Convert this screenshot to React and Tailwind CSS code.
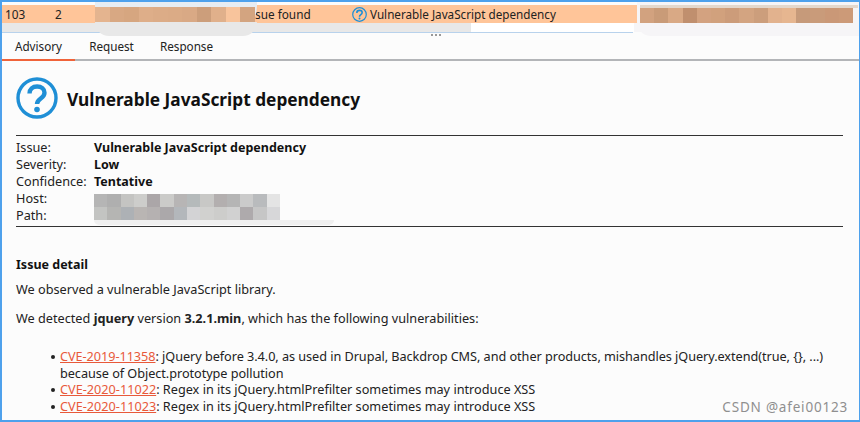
const topMosaic = ["bg-[#e4b48f]","bg-[#d8a883]","bg-[#d6a680]","bg-[#deae89]","bg-[#dcac87]","bg-[#dbab86]","bg-[#d9a985]","bg-[#cc9e7b]","bg-[#e0b08b]","bg-[#f8c49c]","bg-[#d3a480]"];
const rightMosaic = ["bg-[#d2a27f]","bg-[#c99b78]","bg-[#d9a985]","bg-[#c08f6e]","bg-[#d3a280]","bg-[#d1a17d]","bg-[#cc9c7a]","bg-[#d3a481]","bg-[#cc9e7c]","bg-[#e2b28e]","bg-[#e6b690]","bg-[#c69a7a]","bg-[#c99b7a]","bg-[#ca9877]","bg-[#cc9a78]"];
const m1 = ["bg-[#b5b5b5]","bg-[#afafaf]","bg-[#c4c4c2]","bg-[#cdcdcb]","bg-[#aba6a8]","bg-[#cbcbc9]","bg-[#b7b5b5]","bg-[#b5babb]","bg-[#c8c8c6]","bg-[#b3afaf]","bg-[#b5b5b5]","bg-[#cbcbcb]","bg-[#b9bbbd]","bg-[#e4e4e4]"];
const m2 = ["bg-[#c3c4c2]","bg-[#b5b5b3]","bg-[#adb1b5]","bg-[#b9b5b3]","bg-[#b5b1b1]","bg-[#aba8aa]","bg-[#b3b7bb]","bg-[#d3d3d5]","bg-[#d1d1cf]","bg-[#cdcdcb]","bg-[#d1d1d1]","bg-[#aeaaac]","bg-[#c6c6c6]","bg-[#d7d7d9]"];

function QIcon({ className }) {
  return (
    <svg viewBox="0 0 42 42" className={className} fill="none">
      <circle cx="21" cy="21" r="19" stroke="#1f8fd6" strokeWidth="3.4" />
      <path d="M13.5 16.500c0-4.400 3.200-7 7.600-7 4.300 0 7.400 2.500 7.400 6.200 0 5.800-7.500 5.600-7.500 11.300" stroke="#1f8fd6" strokeWidth="4.400" />
      <circle cx="21" cy="32.500" r="2.800" fill="#1f8fd6" />
    </svg>
  );
}

function Meta({ label, value }) {
  return (
    <div className="flex h-[17px] items-center">
      <span className="w-[78px] shrink-0 text-[#222]">{label}</span>
      {value && <span className="text-[12.500px] font-bold text-[#111]">{value}</span>}
    </div>
  );
}

function Cve({ id, tight, children }) {
  return (
    <li className="flex">
      <span className="mr-[5px] mt-[7px] h-[4px] w-[4px] shrink-0 rounded-full bg-[#222]" />
      <span className={tight ? "tracking-[-0.05px]" : ""}>
        <span className="text-[#e8593a] underline">{id}</span>
        {children}
      </span>
    </li>
  );
}

export default function App() {
  return (
    <div className="relative h-[422px] w-[860px] overflow-hidden border-x-2 border-y-[2px] border-[#4ea1ec] border-r-[1px] bg-[#fcfcfc] text-[12.700px] leading-[17px] text-[#222] [font-family:'Noto_Sans','Liberation_Sans',sans-serif]">
      <div className="mt-[3px] flex h-[18px] items-center whitespace-nowrap bg-[#ffc599] text-[11.800px] text-[#222]">
        <span className="ml-[3px] w-[50px]">103</span>
        <span className="w-[191px]">2</span>
        <span className="w-[56px] pl-[9px]">sue found</span>
        <span className="w-[50px]"></span>
        <QIcon className="h-[15px] w-[15px]" />
        <span className="ml-[3px] text-[11.700px]">Vulnerable JavaScript dependency</span>
      </div>
      <div className="flex h-[9px]">
        <div className="w-[469px] bg-[#e8e8e8]" />
        <div className="w-[163px] bg-white" />
        <div className="flex-1 bg-[#f6f5f7]" />
      </div>
      <div className="h-[1px] w-[631px] bg-[#b8d2ec]" />
      <div className="flex h-[28px] items-end border-b-2 border-[#b3b5b8] text-[11.700px] text-[#222]">
        <div className="-mb-[2px] flex h-[27px] w-[73px] items-center justify-center border-b-[2px] border-[#f0633a]">Advisory</div>
        <div className="flex h-[25px] w-[73px] items-center justify-center">Request</div>
        <div className="flex h-[25px] w-[77px] items-center justify-center">Response</div>
      </div>
      <div className="px-[14px]">
        <div className="flex h-[74px] items-center">
          <QIcon className="h-[42px] w-[42px]" />
          <h1 className="ml-[9px] mt-[3px] text-[17.300px] font-bold text-[#111]">Vulnerable JavaScript dependency</h1>
        </div>
        <div className="w-[827px] border-y border-[#333] pb-[2px] pt-[3px]">
          <Meta label="Issue:" value="Vulnerable JavaScript dependency" />
          <Meta label="Severity:" value="Low" />
          <Meta label="Confidence:" value="Tentative" />
          <Meta label="Host:" />
          <Meta label="Path:" />
        </div>
        <h2 className="mt-[29px] text-[12.500px] font-bold text-[#111]">Issue detail</h2>
        <p className="mt-[8px]">We observed a vulnerable JavaScript library.</p>
        <p className="mt-[12px]">
          We detected <b>jquery</b> version <b>3.2.1.min</b>, which has the following vulnerabilities:
        </p>
        <ul className="ml-[35px] mt-[21px] w-[790px] leading-[16.500px]">
          <Cve tight id="CVE-2019-11358">: jQuery before 3.4.0, as used in Drupal, Backdrop CMS, and other products, mishandles jQuery.extend(true, {"{}"}, ...) because of Object.prototype pollution</Cve>
          <Cve id="CVE-2020-11022">: Regex in its jQuery.htmlPrefilter sometimes may introduce XSS</Cve>
          <Cve id="CVE-2020-11023">: Regex in its jQuery.htmlPrefilter sometimes may introduce XSS</Cve>
        </ul>
      </div>

      <div className="absolute left-[93px] top-0 h-[34px] w-[162px] rounded-b-[30px] bg-[#e7edf3]" />
      <div className="absolute left-[93px] top-[5px] flex h-[15px] w-[160px]">
        {topMosaic.map((c, i) => <div key={i} className={`flex-1 ${c}`} />)}
      </div>
      <div className="absolute left-[93px] top-[20px] h-[14px] w-[162px] rounded-b-[30px] bg-[#e8e8e8]" />

      <div className="absolute right-0 top-0 h-[34px] w-[222px] rounded-bl-[14px] bg-[#f6f5f7]" />
      <div className="absolute left-[638px] top-[3px] h-[3px] w-[218px] bg-[#e4d8cc]" />
      <div className="absolute left-[638px] top-[6px] flex h-[15px] w-[213px]">
        {rightMosaic.map((c, i) => <div key={i} className={`flex-1 ${c}`} />)}
      </div>

      <div className="absolute left-[429px] top-[32px] flex gap-[2px]">
        <i className="h-[2px] w-[2px] bg-[#999]" /><i className="h-[2px] w-[2px] bg-[#999]" /><i className="h-[2px] w-[2px] bg-[#999]" />
      </div>

      <div className="absolute left-[92px] top-[192px] flex h-[13px] w-[186px]">
        {m1.map((c, i) => <div key={i} className={`flex-1 ${c}`} />)}
      </div>
      <div className="absolute left-[92px] top-[205px] flex h-[13px] w-[186px]">
        {m2.map((c, i) => <div key={i} className={`flex-1 ${c}`} />)}
      </div>
      <div className="absolute left-[92px] top-[218px] h-[5px] w-[240px] rounded-b-[6px] bg-[#f0f0f0]" />

      <div className="absolute bottom-[5px] right-[11px] text-[13.500px] leading-[16px] tracking-[0.8px] text-[#8f8f8f]">CSDN @afei00123</div>
    </div>
  );
}
